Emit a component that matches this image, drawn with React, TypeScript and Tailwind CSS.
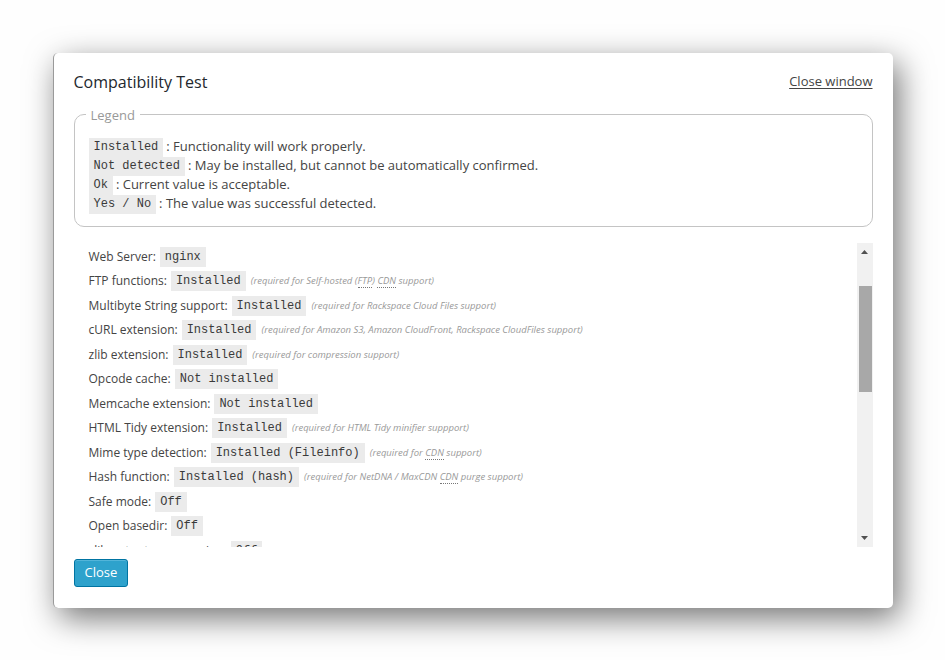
import type { ReactNode } from 'react';

interface Check {
  label: string;
  value: string;
  note?: ReactNode;
}

const Abbr = ({ children }: { children: ReactNode }) => (
  <span className="border-b border-dotted border-[#777]">{children}</span>
);

const checks: Check[] = [
  { label: 'Web Server:', value: 'nginx' },
  {
    label: 'FTP functions:',
    value: 'Installed',
    note: (
      <>
        (required for Self-hosted (<Abbr>FTP</Abbr>) <Abbr>CDN</Abbr> support)
      </>
    ),
  },
  { label: 'Multibyte String support:', value: 'Installed', note: '(required for Rackspace Cloud Files support)' },
  {
    label: 'cURL extension:',
    value: 'Installed',
    note: '(required for Amazon S3, Amazon CloudFront, Rackspace CloudFiles support)',
  },
  { label: 'zlib extension:', value: 'Installed', note: '(required for compression support)' },
  { label: 'Opcode cache:', value: 'Not installed' },
  { label: 'Memcache extension:', value: 'Not installed' },
  { label: 'HTML Tidy extension:', value: 'Installed', note: '(required for HTML Tidy minifier suppport)' },
  {
    label: 'Mime type detection:',
    value: 'Installed (Fileinfo)',
    note: (
      <>
        (required for <Abbr>CDN</Abbr> support)
      </>
    ),
  },
  {
    label: 'Hash function:',
    value: 'Installed (hash)',
    note: (
      <>
        (required for NetDNA / MaxCDN <Abbr>CDN</Abbr> purge support)
      </>
    ),
  },
  { label: 'Safe mode:', value: 'Off' },
  { label: 'Open basedir:', value: 'Off' },
  { label: 'zlib output compression:', value: 'Off' },
];

const legend = [
  { code: 'Installed', text: 'Functionality will work properly.' },
  { code: 'Not detected', text: 'May be installed, but cannot be automatically confirmed.' },
  { code: 'Ok', text: 'Current value is acceptable.' },
  { code: 'Yes / No', text: 'The value was successful detected.' },
];

export default function App() {
  return (
    <div className="flex min-h-screen items-center justify-center bg-[#fefefe] font-['Open_Sans',sans-serif] text-[#444]">
      <div className="flex h-[555px] w-[840px] flex-col rounded-[5px] border-l border-[#9a9a9a] bg-white pb-5 pl-[20px] pr-5 pt-[17px] shadow-[6px_10px_32px_rgba(0,0,0,0.55)]">
        {/* header */}
        <div className="flex items-center justify-between">
          <h3 className="text-[16px] font-normal leading-[24px] text-[#23282d]">Compatibility Test</h3>
          <a href="#" className="text-[13px] text-[#444] underline underline-offset-2">
            Close window
          </a>
        </div>

        {/* legend */}
        <fieldset className="mt-[12px] rounded-[10px] border border-[#c4c4c4] px-[14px] pb-[12px] pt-[14px]">
          <legend className="ml-[-3px] px-[5px] text-[13px] leading-[18px] text-[#999]">Legend</legend>
          <div className="text-[13px]">
            {legend.map((l) => (
              <div key={l.code} className="flex h-[19px] items-center whitespace-nowrap">
                <code className="h-[19px] bg-[#ebebeb] px-[5px] font-['Liberation_Mono',monospace] text-[12px] leading-[19px] text-[#3a3a3a]">
                  {l.code}
                </code>
                <span className="ml-[3px]">: {l.text}</span>
              </div>
            ))}
          </div>
        </fieldset>

        {/* checks list + scrollbar */}
        <div className="mt-4 flex h-[304px]">
          <div className="flex-1 overflow-hidden pl-[15px] pt-[2px]">
            {checks.map((c) => (
              <div key={c.label} className="flex h-[24.5px] items-center whitespace-nowrap text-[12px]">
                <span>{c.label}</span>
                <span className="ml-[4px] h-[20px] bg-[#ebebeb] px-[5px] font-['Liberation_Mono',monospace] text-[12px] leading-[20px] text-[#3a3a3a]">
                  {c.value}
                </span>
                {c.note && <span className="ml-[5px] text-[9.5px] italic text-[#999]">{c.note}</span>}
              </div>
            ))}
          </div>
          <div className="relative flex w-4 flex-col items-center justify-between bg-[#f1f1f1] py-[7px]">
            <svg width="7" height="4" viewBox="0 0 7 4">
              <path d="M0 4 L3.5 0 L7 4 Z" fill="#505050" />
            </svg>
            <div className="absolute left-[2px] top-[43px] h-[106px] w-[13px] bg-[#a8a8a8]" />
            <svg width="7" height="4" viewBox="0 0 7 4">
              <path d="M0 0 L7 0 L3.5 4 Z" fill="#505050" />
            </svg>
          </div>
        </div>

        <div className="mt-3">
          <button
            type="button"
            className="h-[28px] rounded-[3px] border border-[#0074a2] bg-[#2ea2cc] px-[10px] text-[13px] text-white shadow-[inset_0_1px_0_rgba(120,200,230,0.5)]"
          >
            Close
          </button>
        </div>
      </div>
    </div>
  );
}
